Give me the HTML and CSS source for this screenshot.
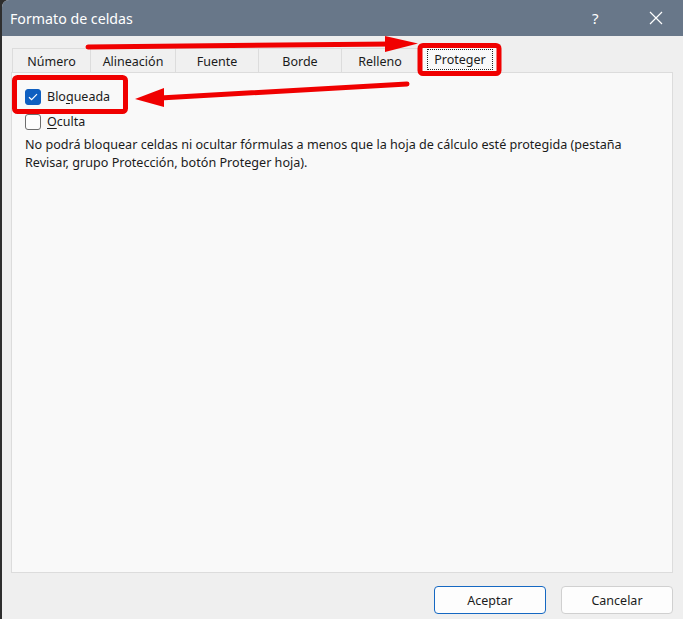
FILE: index.html
```html
<!DOCTYPE html>
<html lang="es">

<head>
  <meta charset="UTF-8" />
  <meta name="viewport" content="width=device-width, initial-scale=1.0" />
  <title>Formato de celdas</title>
  <link rel="stylesheet" href="styles.css">
</head>

<body>
  <div class="window">
    <div class="titlebar">
      <span class="title">Formato de celdas</span>
      <span class="help">?</span>
      <span class="close">
        <svg width="14" height="14" viewBox="0 0 14 14">
          <path d="M1 1 L13 13 M13 1 L1 13" stroke="#fff" stroke-width="1.2" fill="none" />
        </svg>
      </span>
    </div>

    <div class="content">
      <div class="tabs">
        <div class="tab">Número</div>
        <div class="tab">Alineación</div>
        <div class="tab">Fuente</div>
        <div class="tab">Borde</div>
        <div class="tab">Relleno</div>
        <div class="tab active"><span class="focus">Proteger</span></div>
      </div>

      <div class="panel">
        <div class="check-row">
          <span class="checkbox checked">
            <svg width="10" height="8" viewBox="0 0 10 8">
              <path d="M1 4.2 L3.6 6.6 L9 1.2" stroke="#fff" stroke-width="1.2" fill="none" />
            </svg>
          </span>
          <span>Blo<u>q</u>ueada</span>
        </div>
        <div class="check-row">
          <span class="checkbox"></span>
          <span><u>O</u>culta</span>
        </div>
        <p class="note">No podrá bloquear celdas ni ocultar fórmulas a menos que la hoja de cálculo esté protegida (pestaña Revisar, grupo Protección, botón Proteger hoja).</p>
      </div>

      <div class="buttons">
        <button class="btn primary">Aceptar</button>
        <button class="btn">Cancelar</button>
      </div>
    </div>
  </div>

  <!-- anotaciones en rojo encima del cuadro -->
  <svg class="marks" width="683" height="619" viewBox="0 0 683 619">
    <rect x="420" y="45.5" width="79" height="28" rx="3" fill="none" stroke="#f00000" stroke-width="5" />
    <rect x="14.5" y="77.5" width="111" height="34" rx="3" fill="none" stroke="#f00000" stroke-width="5" />
    <path d="M88 47 L392 44" stroke="#f00000" stroke-width="5" stroke-linecap="round" />
    <polygon points="385,36 418,43.5 385,52" fill="#f00000" />
    <path d="M407 84 L160 98" stroke="#f00000" stroke-width="5" stroke-linecap="round" />
    <polygon points="164,88 135,99 164,107" fill="#f00000" />
  </svg>
</body>

</html>
```

FILE: styles.css
```css
html,
body {
  margin: 0;
  padding: 0;
}

body {
  position: relative;
  width: 683px;
  height: 619px;
  overflow: hidden;
  background-color: #2e2e2e;
  font-family: "Noto Sans", "Open Sans", sans-serif;
  font-size: 12px;
  color: #1b1b1b;
}

.window {
  margin-left: 2px;
  width: 681px;
  height: 619px;
  background-color: #efefef;
  border-top-left-radius: 7px;
  overflow: hidden;
}

.titlebar {
  display: flex;
  align-items: center;
  height: 36px;
  background-color: #687789;
  color: #fff;
}

.title {
  flex: 1;
  padding-left: 8px;
  font-size: 14.2px;
}

.help {
  width: 14px;
  font-size: 15px;
  margin-right: 43px;
}

.close {
  display: flex;
  margin-right: 20px;
}

.content {
  padding: 11px 10px 0 9px;
}

.tabs {
  display: flex;
  align-items: flex-end;
  height: 25px;
  padding-left: 1px;
}

.tab {
  height: 24px;
  display: flex;
  align-items: center;
  justify-content: center;
  padding-top: 1px;
  box-sizing: border-box;
  border: 1px solid #dcdcdc;
  border-bottom: none;
  border-left: none;
  background-color: #f0f0f0;
  font-size: 12.5px;
}

.tab:first-child {
  border-left: 1px solid #dcdcdc;
  width: 79px;
}

.tab:nth-child(2) {
  width: 85px;
}

.tab:nth-child(3) {
  width: 83px;
}

.tab:nth-child(4) {
  width: 83px;
}

.tab:nth-child(5) {
  width: 77px;
}

.tab.active {
  width: 82px;
  height: 29px;
  margin-bottom: -1px;
  position: relative;
  border-left: 1px solid #dcdcdc;
  background-color: #f9f9f9;
}

.focus {
  padding: 1px 6px;
  border: 1px dotted #222;
}

.panel {
  height: 501px;
  border: 1px solid #dcdcdc;
  background-color: #f9f9f9;
  padding: 11px 0 0 13px;
  box-sizing: border-box;
}

.check-row {
  display: flex;
  align-items: center;
  gap: 6px;
  height: 25px;
  font-size: 12.5px;
}

.check-row u {
  text-underline-offset: 2px;
}

.checkbox {
  width: 14px;
  height: 14px;
  border: 1px solid #6e6e6e;
  border-radius: 3px;
  background-color: #fdfdfd;
  display: flex;
  align-items: center;
  justify-content: center;
}

.checkbox.checked {
  background-color: #0f5fc0;
  border-color: #0f5fc0;
}

.note {
  margin: 2px 0 0;
  width: 630px;
  line-height: 18px;
  font-size: 12.6px;
}

.buttons {
  display: flex;
  justify-content: flex-end;
  gap: 15px;
  margin-top: 13px;
}

.btn {
  width: 112px;
  height: 28px;
  border: 1px solid #d0d0d0;
  border-radius: 4px;
  background-color: #fdfdfd;
  font-family: "Noto Sans", "Open Sans", sans-serif;
  font-size: 12.5px;
  color: #1b1b1b;
}

.btn.primary {
  border-color: #1568c2;
}

.marks {
  position: absolute;
  top: 0;
  left: 0;
}
```
